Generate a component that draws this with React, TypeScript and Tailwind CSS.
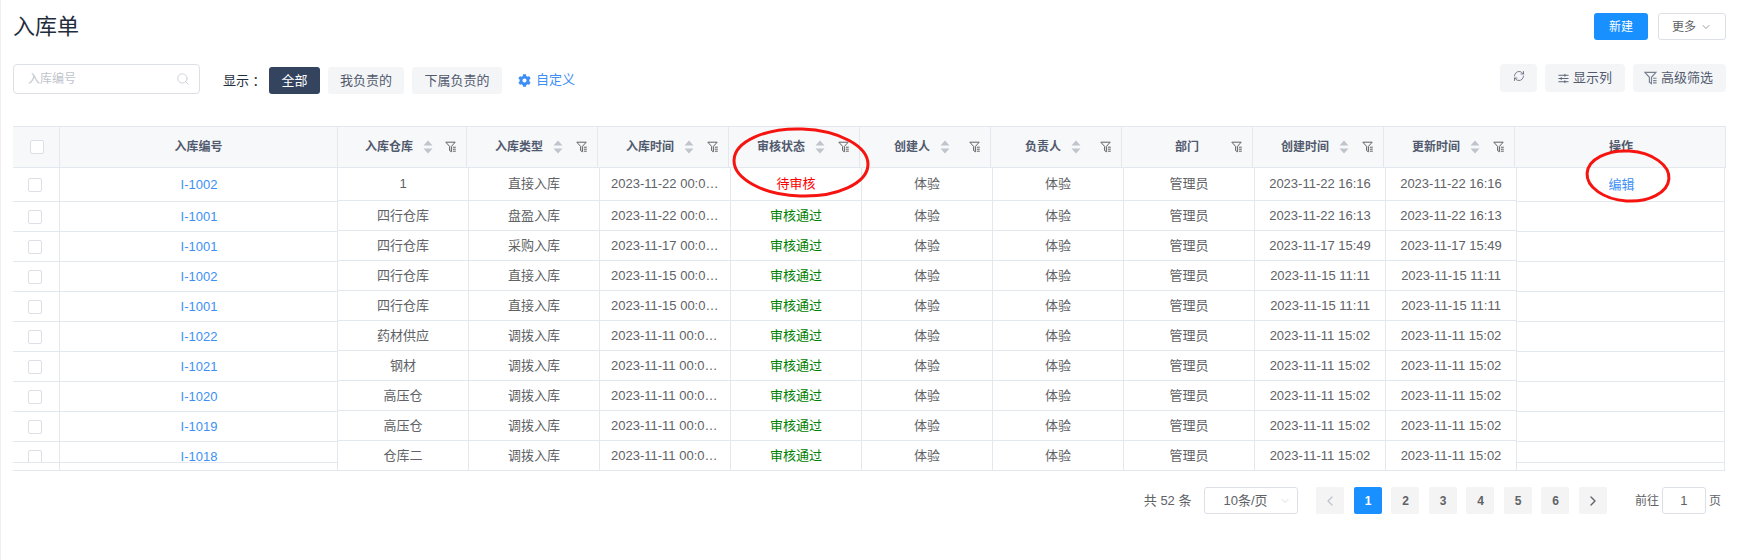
// App.tsx
import React from "react";
import { ChevronDown, ChevronLeft, ChevronRight, RefreshCw, Search } from "lucide-react";
import { FaCog } from "react-icons/fa";

interface Row {
  code: string;
  warehouse: string;
  type: string;
  time: string;
  status: string;
  created: string;
}

const rows: Row[] = [
  { code: "I-1002", warehouse: "1", type: "直接入库", time: "2023-11-22 00:00:00", status: "待审核", created: "2023-11-22 16:16" },
  { code: "I-1001", warehouse: "四行仓库", type: "盘盈入库", time: "2023-11-22 00:00:00", status: "审核通过", created: "2023-11-22 16:13" },
  { code: "I-1001", warehouse: "四行仓库", type: "采购入库", time: "2023-11-17 00:00:00", status: "审核通过", created: "2023-11-17 15:49" },
  { code: "I-1002", warehouse: "四行仓库", type: "直接入库", time: "2023-11-15 00:00:00", status: "审核通过", created: "2023-11-15 11:11" },
  { code: "I-1001", warehouse: "四行仓库", type: "直接入库", time: "2023-11-15 00:00:00", status: "审核通过", created: "2023-11-15 11:11" },
  { code: "I-1022", warehouse: "药材供应", type: "调拨入库", time: "2023-11-11 00:00:00", status: "审核通过", created: "2023-11-11 15:02" },
  { code: "I-1021", warehouse: "钢材", type: "调拨入库", time: "2023-11-11 00:00:00", status: "审核通过", created: "2023-11-11 15:02" },
  { code: "I-1020", warehouse: "高压仓", type: "调拨入库", time: "2023-11-11 00:00:00", status: "审核通过", created: "2023-11-11 15:02" },
  { code: "I-1019", warehouse: "高压仓", type: "调拨入库", time: "2023-11-11 00:00:00", status: "审核通过", created: "2023-11-11 15:02" },
  { code: "I-1018", warehouse: "仓库二", type: "调拨入库", time: "2023-11-11 00:00:00", status: "审核通过", created: "2023-11-11 15:02" },
];

const headers = [
  { label: "入库仓库", width: "w-[129px]", sort: true },
  { label: "入库类型", width: "w-[131px]", sort: true },
  { label: "入库时间", width: "w-[131px]", sort: true },
  { label: "审核状态", width: "w-[131px]", sort: true },
  { label: "创建人", width: "w-[131px]", sort: true },
  { label: "负责人", width: "w-[131px]", sort: true },
  { label: "部门", width: "w-[131px]", sort: false },
  { label: "创建时间", width: "w-[131px]", sort: true },
  { label: "更新时间", width: "w-[131px]", sort: true },
];

function FilterIcon({ className }: { className: string }) {
  return (
    <svg viewBox="0 0 12 12" className={className} fill="none" stroke="currentColor" strokeWidth="1">
      <path d="M0.8 1.2h9.4L6.4 5.4v5.4L4.6 9.6V5.4z" />
      <path d="M7.8 6.2h3M7.8 8.2h3M7.8 10.2h3" />
    </svg>
  );
}

function SortIcon() {
  return (
    <svg viewBox="0 0 10 14" className="w-[10px] h-[14px] ml-[10px] shrink-0" fill="#c0c4cc">
      <path d="M5 0.5 9.5 5.5H0.5zM5 13.5 0.5 8.5H9.5z" />
    </svg>
  );
}

function Checkbox() {
  return <div className="w-[14px] h-[14px] bg-white border border-[#dcdfe6] rounded-[2px]" />;
}

function GrayButton({ children, className }: { children: React.ReactNode; className: string }) {
  return (
    <div className={`h-[28px] flex items-center justify-center bg-[#f4f5f7] rounded-[4px] text-[13px] text-[#515a6e] ${className}`}>
      {children}
    </div>
  );
}

function PageButton({ children, active }: { children: React.ReactNode; active?: boolean }) {
  return (
    <div
      className={`w-[28px] h-[27px] flex items-center justify-center rounded-[2px] text-[12px] font-bold ${
        active ? "bg-[#1890ff] text-white" : "bg-[#f4f4f5] text-[#606266]"
      }`}
    >
      {children}
    </div>
  );
}

const cell = "w-[131px] h-full shrink-0 flex items-center justify-center border-r border-[#e3e8ee] text-[13px]";

export default function App() {
  return (
    <div className="relative w-[1745px] h-[560px] overflow-hidden bg-white border-l border-[#eeeeee] pl-[12px] pr-[19px] pt-[13px] font-['Liberation_Sans','Noto_Sans_CJK_SC',sans-serif]">
      {/* title */}
      <div className="flex items-center justify-between h-[27px]">
        <div className="text-[22px] text-[#1f2d3d] leading-[27px]">入库单</div>
        <div className="flex items-center gap-[10px]">
          <div className="w-[54px] h-[27px] flex items-center justify-center bg-[#1890ff] rounded-[3px] text-white text-[12px]">新建</div>
          <div className="w-[68px] h-[27px] flex items-center justify-center gap-[4px] border border-[#dcdfe6] rounded-[3px] text-[#606266] text-[12px]">
            更多
            <ChevronDown className="w-[12px] h-[12px]" strokeWidth={1.25} />
          </div>
        </div>
      </div>

      {/* toolbar */}
      <div className="flex items-start justify-between mt-[24px] h-[30px]">
        <div className="flex items-center">
          <div className="w-[187px] h-[30px] flex items-center justify-between pl-[14px] pr-[9px] border border-[#dcdfe6] rounded-[4px] text-[12px] text-[#c0c4cc]">
            入库编号
            <Search className="w-[14px] h-[14px]" strokeWidth={1.25} />
          </div>
          <div className="ml-[23px] w-[46px] mt-[3px] text-[13px] text-[#1f2d3d]">显示 ：</div>
          <div className="w-[51px] h-[27px] mt-[3px] flex items-center justify-center bg-[#34445f] rounded-[3px] text-white text-[13px]">全部</div>
          <div className="w-[76px] h-[27px] mt-[3px] ml-[8px] flex items-center justify-center bg-[#f4f5f7] rounded-[3px] text-[#515a6e] text-[13px]">我负责的</div>
          <div className="w-[90px] h-[27px] mt-[3px] ml-[8px] flex items-center justify-center bg-[#f4f5f7] rounded-[3px] text-[#515a6e] text-[13px]">下属负责的</div>
          <div className="ml-[16px] mt-[2px] flex items-center gap-[5px] text-[#3d8ff5] text-[13px]">
            <FaCog className="w-[13px] h-[13px]" />
            自定义
          </div>
        </div>
        <div className="flex items-center gap-[8px]">
          <GrayButton className="w-[37px]">
            <RefreshCw className="w-[12px] h-[12px] mb-[4px]" strokeWidth={1.5} />
          </GrayButton>
          <GrayButton className="w-[80px] gap-[4px]">
            <svg viewBox="0 0 12 12" className="w-[11px] h-[11px]" fill="none" stroke="currentColor" strokeWidth="1">
              <path d="M0.5 2.5h11M0.5 6h11M0.5 9.5h11" />
              <path d="M7.5 1v3M3.5 4.5v3M7.5 8v3" />
            </svg>
            显示列
          </GrayButton>
          <GrayButton className="w-[93px] gap-[3px]">
            <FilterIcon className="w-[14px] h-[14px] -ml-[2px] text-[#7a8291]" />
            高级筛选
          </GrayButton>
        </div>
      </div>

      {/* table */}
      <div className="mt-[32px] w-[1713px]">
        <div className="flex h-[42px] border-y border-[#e3e8ee] bg-[#f7f8f9]">
          <div className="w-[47px] h-full shrink-0 flex items-center justify-center border-r border-[#e3e8ee] pl-[2px]">
            <Checkbox />
          </div>
          <div className="w-[278px] h-full shrink-0 flex items-center justify-center border-r border-[#e3e8ee] text-[12px] font-bold text-[#515a6e]">入库编号</div>
          {headers.map((h) => (
            <div
              key={h.label}
              className={`${h.width} relative h-full shrink-0 flex items-center justify-center ${h.sort ? "pr-[6px]" : ""} border-r border-[#e3e8ee] text-[12px] font-bold text-[#515a6e]`}
            >
              {h.label}
              {h.sort && <SortIcon />}
              <FilterIcon className="absolute right-[9px] top-[14px] w-[12px] h-[12px] text-[#606266]" />
            </div>
          ))}
          <div className="w-[211px] h-full shrink-0 flex items-center justify-center pl-[2px] border-r border-[#e3e8ee] text-[12px] font-bold text-[#515a6e]">操作</div>
        </div>

        <div className="flex h-[303px]">
          {/* fixed left columns */}
          <div className="w-[325px] shrink-0 flex flex-col">
            <div className="h-[295px] overflow-hidden border-b border-[#e3e8ee]">
              {rows.map((r, i) => (
                <div key={i} className={`flex ${i === 0 ? "h-[34px]" : "h-[30px]"} border-b border-[#e3e8ee]`}>
                  <div className="w-[47px] h-full shrink-0 flex items-center justify-center pr-[2px] border-r border-[#e3e8ee]">
                    <Checkbox />
                  </div>
                  <div className="w-[278px] h-full shrink-0 flex items-center justify-center text-[13px] text-[#3d8ff5]">{r.code}</div>
                </div>
              ))}
            </div>
            <div className="flex-1 border-b border-[#e3e8ee]">
              <div className="w-[47px] h-full border-r border-[#e3e8ee]" />
            </div>
          </div>

          {/* scrolling columns */}
          <div className="w-[1180px] shrink-0 border-l border-[#e3e8ee] -ml-px text-[#606266]">
            {rows.map((r, i) => (
              <div key={i} className={`flex ${i === 0 ? "h-[33px]" : "h-[30px]"} border-b border-[#e3e8ee]`}>
                <div className={cell}>{r.warehouse}</div>
                <div className={cell}>{r.type}</div>
                <div className={`${cell} px-[11px]`}>
                  <div className="w-full truncate text-center">{r.time}</div>
                </div>
                <div className={`${cell} ${r.status === "待审核" ? "text-[#ff0000]" : "text-[#008000]"}`}>{r.status}</div>
                <div className={cell}>体验</div>
                <div className={cell}>体验</div>
                <div className={cell}>管理员</div>
                <div className={cell}>{r.created}</div>
                <div className={cell}>{r.created}</div>
              </div>
            ))}
          </div>

          {/* fixed right column */}
          <div className="w-[208px] shrink-0 flex flex-col border-r border-[#e3e8ee]">
            <div className="h-[295px] overflow-hidden border-b border-[#e3e8ee]">
              {rows.map((r, i) => (
                <div key={i} className={`flex items-center justify-center pl-[2px] ${i === 0 ? "h-[34px]" : "h-[30px]"} border-b border-[#e3e8ee] text-[13px] text-[#3d8ff5]`}>
                  {i === 0 ? "编辑" : ""}
                </div>
              ))}
            </div>
            <div className="flex-1 border-b border-[#e3e8ee]" />
          </div>
        </div>
      </div>

      {/* pagination */}
      <div className="flex items-center justify-end mt-[16px] w-[1708px] h-[27px] text-[13px] text-[#606266]">
        <div>共 52 条</div>
        <div className="w-[94px] h-[27px] ml-[13px] flex items-center justify-between pl-[18px] pr-[6px] border border-[#dcdfe6] rounded-[3px]">
          10条/页
          <ChevronDown className="w-[12px] h-[12px] text-[#c0c4cc]" strokeWidth={1.25} />
        </div>
        <div className="flex items-center gap-[9.5px] ml-[18px]">
          <PageButton>
            <ChevronLeft className="w-[16px] h-[16px] text-[#c0c4cc]" strokeWidth={2} />
          </PageButton>
          <PageButton active>1</PageButton>
          <PageButton>2</PageButton>
          <PageButton>3</PageButton>
          <PageButton>4</PageButton>
          <PageButton>5</PageButton>
          <PageButton>6</PageButton>
          <PageButton>
            <ChevronRight className="w-[16px] h-[16px]" strokeWidth={2} />
          </PageButton>
        </div>
        <div className="ml-[28px] text-[12px]">前往</div>
        <div className="w-[44px] h-[27px] ml-[3px] flex items-center justify-center border border-[#dcdfe6] rounded-[3px]">1</div>
        <div className="ml-[3px] text-[12px]">页</div>
      </div>

      {/* red hand-drawn marks over the table */}
      <svg className="absolute left-0 top-0 w-[1745px] h-[560px] pointer-events-none" viewBox="0 0 1745 560" fill="none" stroke="#f5140f" strokeWidth="3">
        <ellipse cx="800" cy="162.5" rx="67" ry="33.5" transform="rotate(2 800 162.5)" />
        <ellipse cx="1627" cy="176" rx="41" ry="25" transform="rotate(4 1627 176)" />
      </svg>
    </div>
  );
}
